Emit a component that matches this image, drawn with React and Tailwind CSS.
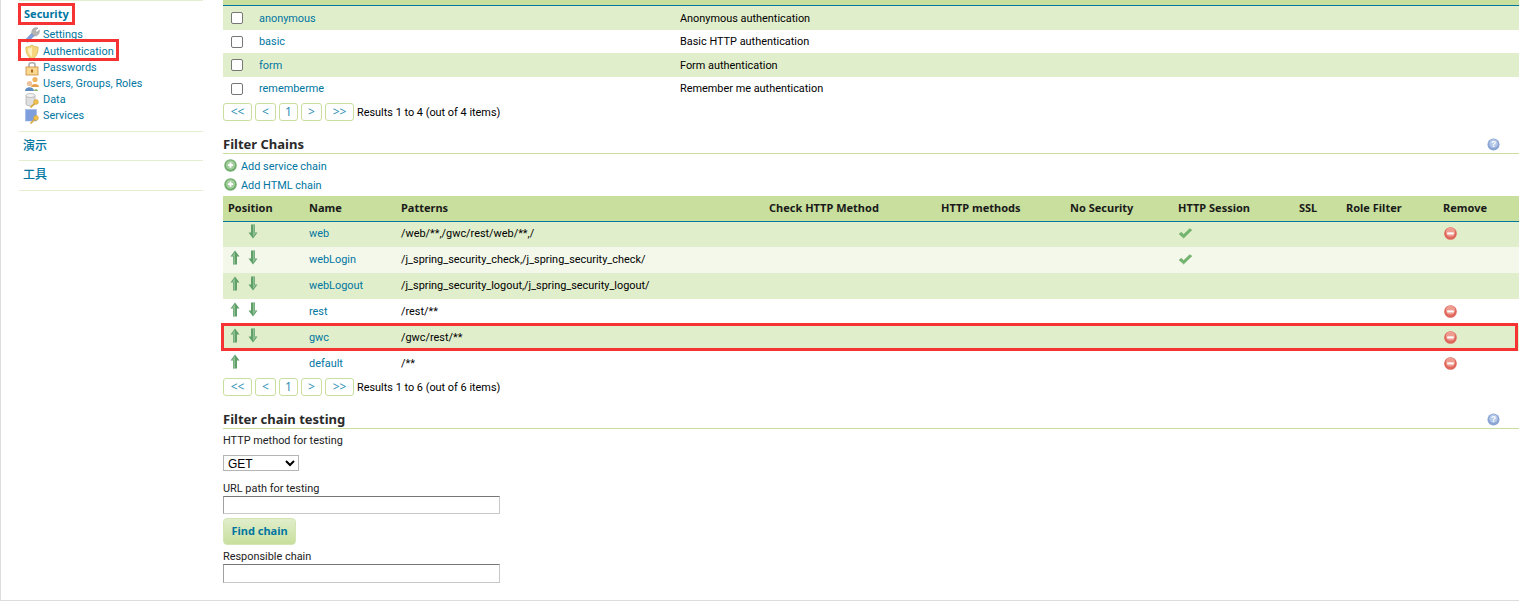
const font = { fontFamily: 'Roboto, "Noto Sans CJK SC", sans-serif' };
const boldFont = "font-['Noto_Sans','Noto_Sans_CJK_SC',sans-serif] font-bold";

function Icon({ children, className = "" }) {
  return <svg viewBox="0 0 16 16" className={`w-4 h-4 shrink-0 ${className}`}>{children}</svg>;
}

const Wrench = () => (
  <Icon>
    <path d="M.8 13 L8.5 5 L11.5 8 L3.5 15.8 Z" fill="#7f9fdc" />
    <path d="M8 7 C6.8 3 10 -.3 14 1 L11.5 3.5 L12.7 5.5 L15.3 3 C16 7.2 12.5 10 9.8 8.6 Z" fill="#b5b5b5" stroke="#8f8f8f" strokeWidth=".5" />
  </Icon>
);
const Shield = () => (
  <Icon>
    <path d="M8 1 C10 2.5 12 3 14 3 C14.5 9 12 13 8 15.5 C4 13 1.5 9 2 3 C4 3 6 2.5 8 1 Z" fill="#f5d67c" stroke="#dcb555" strokeWidth=".8" />
    <path d="M8 3 L8 13 C5.5 11.5 4 9 4 4.6 C5.5 4.5 7 4 8 3 Z" fill="#fbf0c0" />
  </Icon>
);
const Lock = () => (
  <Icon>
    <path d="M5 7 V4.5 C5 2.2 11 2.2 11 4.5 V7" fill="none" stroke="#a9a9a9" strokeWidth="1.5" />
    <rect x="2" y="7" width="12" height="8" fill="#f8d78f" stroke="#c8893a" strokeWidth=".8" />
    <rect x="7" y="9.5" width="2" height="3" fill="#a86a22" />
  </Icon>
);
const Users = () => (
  <Icon>
    <circle cx="11" cy="3.5" r="2.6" fill="#f0b460" />
    <path d="M7 11 C7 7 15 7 15 11 Z" fill="#e8a04c" />
    <circle cx="5.5" cy="7.5" r="2.6" fill="#eec199" />
    <path d="M1 15 C1 10 10 10 10 15 Z" fill="#5f8dc0" />
    <path d="M10 15 C10 12.5 14 12.5 14 15 Z" fill="#86b35e" />
  </Icon>
);
const Key = () => (
  <>
    <circle cx="12" cy="10" r="2.4" fill="#f0c14e" stroke="#c99a2e" strokeWidth=".5" />
    <path d="M10.5 11.5 L6.5 15.5" stroke="#d9a93a" strokeWidth="1.7" />
  </>
);
const Data = () => (
  <Icon>
    <path d="M2 3.5 V12 C2 14.5 11 14.5 11 12 V3.5 Z" fill="#dfdfdf" stroke="#a8a8a8" strokeWidth=".7" />
    <ellipse cx="6.5" cy="3.5" rx="4.5" ry="2" fill="#f3f3f3" stroke="#a8a8a8" strokeWidth=".7" />
    <Key />
  </Icon>
);
const Services = () => (
  <Icon>
    <rect x="1.5" y="1.5" width="11" height="11.5" fill="#7f9fdc" stroke="#93aee3" strokeWidth=".5" />
    <Key />
  </Icon>
);
const Plus = () => (
  <svg viewBox="0 0 14 14" className="w-[13px] h-[13px] shrink-0">
    <circle cx="7" cy="7" r="6.7" fill="#6fae6c" />
    <circle cx="7" cy="6.5" r="5" fill="#a3cd9c" />
    <path d="M7 3.8 V9.4 M4.2 6.6 H9.8" stroke="#fff" strokeWidth="2" />
  </svg>
);
const Help = () => (
  <svg viewBox="0 0 14 14" className="w-[13px] h-[13px] shrink-0">
    <circle cx="7" cy="7" r="6.5" fill="#8aa5d4" />
    <circle cx="7" cy="6" r="4.6" fill="#b4c7e8" />
    <text x="7" y="10" textAnchor="middle" fontSize="9" fontWeight="700" fill="#fff" fontFamily="Liberation Sans">?</text>
  </svg>
);
const Minus = () => (
  <svg viewBox="0 0 14 14" className="w-[13px] h-[13px] block">
    <circle cx="7" cy="7" r="6.8" fill="#e0675c" />
    <circle cx="7" cy="5.5" r="5" fill="#ee9c90" />
    <rect x="3.5" y="5.8" width="7" height="2.2" fill="#fff" />
  </svg>
);
const Check = () => (
  <svg viewBox="0 0 16 12" className="w-[15px] h-[11px] block">
    <path d="M1 6.5 L3.5 4.5 L6 7 L12.5 .8 L15 2.2 L6 11 Z" fill="#72b56e" stroke="#5fa35d" strokeWidth=".5" />
  </svg>
);
const Arrow = ({ up }) => (
  <svg viewBox="0 0 10 15" className={`w-[10px] h-[15px] block ${up ? "" : "rotate-180"}`}>
    <path d="M5 .5 L9.5 6.5 H7 V14.5 H3 V6.5 H.5 Z" fill="#5f9f68" />
    <path d="M5 2 L5 14 H3.5 V6 H2 Z" fill="#8fc096" />
  </svg>
);

const navItems = [
  ["Settings", Wrench],
  ["Authentication", Shield],
  ["Passwords", Lock],
  ["Users, Groups, Roles", Users],
  ["Data", Data],
  ["Services", Services],
];

function Sidebar() {
  return (
    <aside className="w-[184px] ml-[18px] mr-[20px] shrink-0 text-[#0076a1]">
      <div className="h-px bg-[#e3efd0]" />
      <div className="h-[131px] pt-[5px] border-b border-[#e3efd0]">
        <div className={`relative h-[20px] pl-[5px] text-[11px] leading-[15px] ${boldFont}`}>
          Security
          <span className="absolute -left-px -top-[3px] w-[57px] h-[22px] border-[3px] border-[#f53333]" />
        </div>
        <ul className="text-[10.9px]">
          {navItems.map(([label, I], i) => (
            <li key={label} className={`relative flex items-center pl-[5px] gap-[3px] leading-[16px] ${i === 0 ? "h-[18px]" : "h-[16px]"}`}>
              <I />
              <span>{label}</span>
              {i === 1 && <span className="absolute -left-px -top-[5px] w-[101px] h-[22px] border-[3px] border-[#f53333]" />}
            </li>
          ))}
        </ul>
      </div>
      <div className="h-[29px] border-b border-[#e3efd0] pl-[4px] text-[12px] font-medium flex items-center">演示</div>
      <div className="h-[30px] pb-[1px] border-b border-[#e3efd0] pl-[4px] text-[12px] font-medium flex items-center">工具</div>
    </aside>
  );
}

function PageBtn({ children, w }) {
  return (
    <span className={`${w} h-[18px] flex items-center justify-center border border-[#c8df9d] rounded-[3px] text-[#2f8fb5] text-[12px] bg-white font-['Noto_Sans',sans-serif]`}>
      {children}
    </span>
  );
}

function Pager({ text, className = "" }) {
  return (
    <div className={`flex items-center h-[18px] text-[10.9px] text-black ${className}`}>
      <PageBtn w="w-[29px] mr-[3px]">&lt;&lt;</PageBtn>
      <PageBtn w="w-[21px] mr-[3px]">&lt;</PageBtn>
      <PageBtn w="w-[19px] mr-[3px]">1</PageBtn>
      <PageBtn w="w-[21px] mr-[3px]">&gt;</PageBtn>
      <PageBtn w="w-[29px] mr-[3px]">&gt;&gt;</PageBtn>
      <span className="pt-[2px]">{text}</span>
    </div>
  );
}

function SectionTitle({ children, className = "" }) {
  return (
    <div className={`flex items-end justify-between h-[17px] border-b border-[#c8df9d] text-[13px] text-[#2a2a2a] leading-[16px] ${boldFont} ${className}`}>
      <span className="mb-px">{children}</span>
      <span className="mr-[19px] mb-[2px]"><Help /></span>
    </div>
  );
}

const providers = [
  ["anonymous", "Anonymous authentication", "h-[24px] bg-[#e1eecb]"],
  ["basic", "Basic HTTP authentication", "h-[23px]"],
  ["form", "Form authentication", "h-[24px] bg-[#e1eecb]"],
  ["rememberme", "Remember me authentication", "h-[23px]"],
];

const colWidths = [81, 92, 368, 172, 129, 108, 121, 47, 97, 81];
const headers = ["Position", "Name", "Patterns", "Check HTTP Method", "HTTP methods", "No Security", "HTTP Session", "SSL", "Role Filter", "Remove"];

const chains = [
  { name: "web", pat: "/web/**,/gwc/rest/web/**,/", up: false, down: true, check: true, rm: true, bg: "bg-[#e1eecb]" },
  { name: "webLogin", pat: "/j_spring_security_check,/j_spring_security_check/", up: true, down: true, check: true, rm: false, bg: "bg-[#f3f8ea]" },
  { name: "webLogout", pat: "/j_spring_security_logout,/j_spring_security_logout/", up: true, down: true, check: false, rm: false, bg: "bg-[#e1eecb]" },
  { name: "rest", pat: "/rest/**", up: true, down: true, check: false, rm: true, bg: "bg-white" },
  { name: "gwc", pat: "/gwc/rest/**", up: true, down: true, check: false, rm: true, bg: "bg-[#e1eecb]" },
  { name: "default", pat: "/**", up: true, down: false, check: false, rm: true, bg: "bg-white" },
];

function ChainsTable() {
  return (
    <table className="w-full table-fixed border-collapse text-[10.9px] mt-[2px]">
      <colgroup>
        {colWidths.map((w, i) => <col key={i} style={{ width: w }} />)}
      </colgroup>
      <thead>
        <tr className="h-[25px] bg-[#c8df9d] border-b border-[#0076a1]">
          {headers.map((h) => (
            <th key={h} className={`pl-[5px] text-left text-[11px] text-[#1a1a1a] whitespace-nowrap ${boldFont}`}>{h}</th>
          ))}
        </tr>
      </thead>
      <tbody>
        {chains.map((c) => (
          <tr key={c.name} className={`h-[26px] ${c.bg}`}>
            <td className="pl-[7px] align-middle">
              <div className="flex gap-[8px] -mt-[5px]">
                <span className="w-[10px]">{c.up && <Arrow up />}</span>
                <span className="w-[10px]">{c.down && <Arrow />}</span>
              </div>
            </td>
            <td className="pl-[5px] text-[#0076a1]">{c.name}</td>
            <td className="pl-[5px] text-black whitespace-nowrap">{c.pat}</td>
            <td /><td /><td />
            <td className="pl-[5px]"><div className="-mt-px">{c.check && <Check />}</div></td>
            <td /><td />
            <td className="pl-[6px]"><div className="-mt-px">{c.rm && <Minus />}</div></td>
          </tr>
        ))}
      </tbody>
    </table>
  );
}

export default function App() {
  return (
    <div style={font} className="relative w-[1519px] h-[601px] overflow-hidden bg-white border-l border-b border-[#dcdcdc] flex text-[10.9px]">
      <Sidebar />
      <main className="flex-1 min-w-0">
        <div className="h-[5px] bg-[#c8df9d] border-b border-[#0076a1] box-content" />
        {providers.map(([n, d, cls]) => (
          <div key={n} className={`flex items-center ${cls}`}>
            <span className="w-[36px] pl-[8px] flex"><input type="checkbox" className="w-[12px] h-[12px] appearance-none border border-[#767676] rounded-[2px] bg-white" /></span>
            <span className="w-[421px] pt-[2px] text-[#0076a1]">{n}</span>
            <span className="pt-[2px] text-black">{d}</span>
          </div>
        ))}
        <Pager text="Results 1 to 4 (out of 4 items)" className="mt-[3px]" />

        <SectionTitle className="mt-[16px]">Filter Chains</SectionTitle>
        <div className="mt-[2px] h-[19px] flex items-center gap-[4px] text-[#0076a1] ml-[1px]"><Plus /><span className="pt-[4px]">Add service chain</span></div>
        <div className="h-[19px] flex items-center gap-[4px] text-[#0076a1] ml-[1px]"><Plus /><span className="pt-[4px]">Add HTML chain</span></div>

        <div className="relative">
          <ChainsTable />
          <span className="absolute left-[-2px] top-[127px] w-[1297px] h-[28px] border-[3px] border-[#f53333] pointer-events-none" />
        </div>
        <Pager text="Results 1 to 6 (out of 6 items)" className="mt-[1px]" />

        <SectionTitle className="mt-[16px]">Filter chain testing</SectionTitle>
        <div className="w-[277px] text-[#222]">
          <label className="block mt-[4px] leading-[16px]">HTTP method for testing</label>
          <select className="block mt-[6px] w-[76px] h-[16px] border border-[#b5b5b5] text-[12px] text-black bg-white" style={{ fontFamily: '"Liberation Sans", sans-serif' }}>
            <option>GET</option>
          </select>
          <label className="block mt-[9px] h-[16px] leading-[18px]">URL path for testing</label>
          <input className="block w-[277px] h-[18px] border border-[#c8c8c8] border-t-[#767676] border-l-[#a0a0a0]" />
          <button className={`block mt-[4px] w-[73px] h-[27px] rounded-[4px] border border-[#d4e5b4] bg-gradient-to-b from-[#e1eecb] to-[#c8df9d] text-[#0076a1] text-[11px] ${boldFont}`}>Find chain</button>
          <label className="block mt-[3px] h-[16px] leading-[18px]">Responsible chain</label>
          <input className="block w-[277px] h-[19px] border border-[#c8c8c8] border-t-[#767676] border-l-[#a0a0a0]" />
        </div>
      </main>
    </div>
  );
}
